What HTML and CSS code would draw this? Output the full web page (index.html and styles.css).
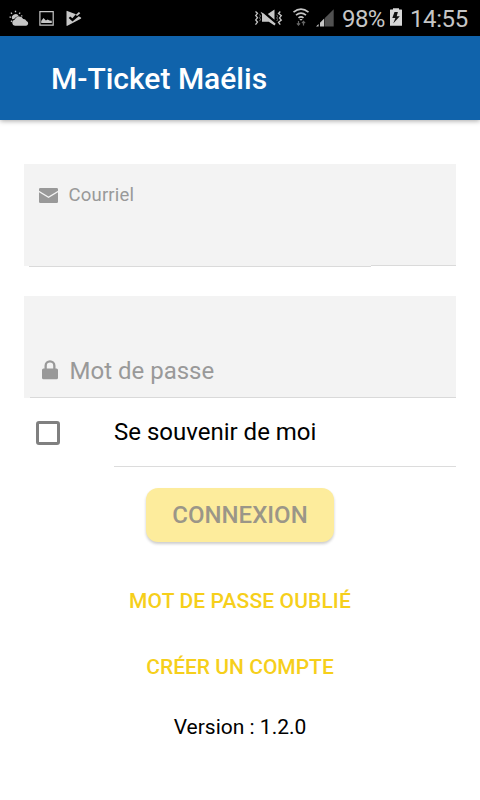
FILE: index.html
```
<!DOCTYPE html>
<html lang="fr">
<head>
<meta charset="utf-8">
<title>M-Ticket Maélis</title>
<link rel="stylesheet" href="styles.css">
</head>
<body>
<div class="status">
  <svg class="notifications" width="90" height="36" viewBox="0 0 90 36" aria-hidden="true">
    <g fill="#c6c6c6" stroke="#c6c6c6">
      <path stroke="none" d="M15 25.7a3 3 0 0 1-.5-5.900 4.800 4.800 0 0 1 8.700-.8 3.500 3.500 0 0 1 3.300 1.900 2.500 2.500 0 0 1-.3 4.800zM12.300 19.300a3.600 3.600 0 1 1 6.500-3.100q-3.200.4-4.700 2.700z"/>
      <path fill="none" stroke-width="1.300" d="M15.500 10.700v1.500M10.900 12.600l1.100 1.100M9.500 17.200h1.600M20.200 12.600l-1.100 1.100M21.300 16.100l1-.4M11 21.700l1-1"/>
      <path fill="none" stroke-width="1.200" d="M39.900 11.700h13.300v13.500H39.900z"/>
      <path stroke="none" d="M41.200 22.900V21l2.300-2.900 2.400 2.300 1.700-.9 2 .9 2.200.4v2.100z"/>
      <path stroke="none" d="M67.300 10.900q-.8-.2-.8.500V25.200q0 1 .9.600l13.400-7q1-.7.100-1.300l-2.200-1.200-6.200 5.100-3.800-3.400 1.500-1.600 2.200 1.900 3.500-4zM78.900 12l1.400 1.200-3.200 2.900-1.500-1.100z"/>
    </g>
  </svg>
  <div class="indicators">
    <svg width="84" height="36" viewBox="0 0 84 36" aria-hidden="true">
      <g fill="none" stroke="#c6c6c6" stroke-width="1.300">
        <path d="M1.500 11.500l2 1.800-1.800 2.200 1.800 2.200-1.800 2.200 1.800 2.200-2 2.600M26.300 11.500l-1.800 2 2.800 2.200-1.800 2.200 1.800 2.200-2.800 2.200 1.800 2.400"/>
        <path stroke="#777" stroke-width="1" d="M5.500 14.500l1 1.600-1 1.700 1 1.700-1 1.700M22.800 14.800l.8 1.500-.8 1.600.8 1.600-.8 1.500"/>
        <path fill="#c6c6c6" stroke="none" d="M6.500 11.800l3.200 1.800 12 10.200-1.200 1.600-5.700-3.600H8V14.500zM13.800 13.900l6.700-4.400v10.200z"/>
        <path stroke-width="1.700" d="M39.500 12.100q7.500-6 15 0M42 15.100q5-4 10 0M44.500 17.900q2.500-2 5 0"/>
        <path fill="#c6c6c6" stroke="none" d="M45.300 19h3.400L47 20.800z"/>
        <path stroke="#666" stroke-width="1.200" d="M44.500 21v4m-1.600-1.700l1.600 1.700 1.600-1.700M49.500 25.500v-4m-1.600 1.700l1.600-1.700 1.600 1.700"/>
      </g>
      <path fill="#515151" d="M70.900 17.900l8.800-8.700v17.300h-8.800z"/>
      <path fill="#c6c6c6" d="M62 26.500l2.600-2.500v2.500zM66 22.700l4.200-4.200v8H66z"/>
    </svg>
    <span class="percent">98%</span>
    <svg class="battery" width="12" height="36" viewBox="0 0 12 36" aria-hidden="true">
      <path fill="#d8d8d8" d="M3 8.300h6v1.300h2.500q.5 0 .5.500V25.700H0V10.100q0-.5.500-.5H3z"/>
      <path fill="#111" d="M7.900 12.100H4.500L2.300 18h3.100l-2.200 5.600 6.600-7.400H6.700z"/>
    </svg>
    <span class="clock">14:55</span>
  </div>
</div>
<header class="toolbar"><h1>M-Ticket Maélis</h1></header>
<main>
  <div class="field email">
    <svg class="mail-icon" width="19" height="15" viewBox="0 0 19 15" aria-hidden="true"><path fill="#999" d="M1.300 0h16.400Q19 0 19 1.300v1.500l-9.500 5.700L0 2.800V1.300Q0 0 1.300 0zM0 4.200l9.500 5.800L19 4.200v9.500q0 1.300-1.300 1.300H1.300Q0 15 0 13.700z"/></svg>
    <label>Courriel</label>
    <div class="underline"><i class="line-start"></i><i class="line-end"></i></div>
  </div>
  <div class="field password">
    <svg class="lock-icon" width="16" height="20" viewBox="0 0 16 20" aria-hidden="true"><path fill="#999" d="M1.500 8.500h1V5.700a5.500 5.500 0 0 1 11 0v2.800h1q1.500 0 1.500 1.500v7.800q0 1.500-1.500 1.500h-13Q0 19.300 0 17.800V10q0-1.500 1.500-1.500zm3.300 0h6.400V5.700a3.200 3.200 0 0 0-6.400 0z"/></svg>
    <label>Mot de passe</label>
  </div>
  <div class="remember">
    <span class="checkbox"></span>
    <div class="remember-label"><span>Se souvenir de moi</span></div>
  </div>
  <div class="actions">
    <button class="login"><span>CONNEXION</span></button>
    <a class="link forgot">MOT DE PASSE OUBLIÉ</a>
    <a class="link create">CRÉER UN COMPTE</a>
    <p class="version">Version : 1.2.0</p>
  </div>
</main>
</body>
</html>
```
FILE: styles.css
```
* { box-sizing: border-box; }
body { margin: 0; background: #fff; color: #000; font-family: Roboto, "Liberation Sans", sans-serif; width: 480px; height: 800px; overflow: hidden; }
svg { display: block; flex: none; }
.status { height: 36px; background: #000; color: #c6c6c6; display: flex; justify-content: space-between; font-size: 24px; line-height: 38px; white-space: nowrap; }
.indicators { display: flex; width: 226px; }
.percent { width: 48px; margin-left: 4px; letter-spacing: -.6px; }
.battery { margin-left: 0; }
.clock { margin-left: 8px; letter-spacing: -.4px; }
.toolbar { height: 84px; background: #1063ab; color: #fff; padding-left: 51px; box-shadow: 0 1px 5px rgba(0,0,0,.35); display: flex; align-items: center; }
h1 { margin: 2px 0 0; font-size: 30px; line-height: 36px; font-weight: 500; white-space: nowrap; }
main { padding: 44px 24px 0; }
.field { background: #f3f3f3; color: #999; display: flex; height: 102px; }
.email { display: grid; grid-template-columns: 19px 1fr; grid-template-rows: 101px 2px; height: 103px; padding-left: 15px; background: linear-gradient(#f3f3f3 102px, transparent 102px); }
.mail-icon { margin-top: 24px; }
.email label { margin: 20px 0 0 10.500px; font-size: 18.500px; line-height: 22px; letter-spacing: .2px; }
.underline { grid-column: 1 / 3; display: flex; margin-left: -10px; }
.underline i { height: 1px; background: #dadada; }
.line-start { width: 342px; margin-top: 1px; }
.line-end { flex: 1; }
.password { margin-top: 29px; padding: 64px 0 0 18px; background: linear-gradient(#d9d9d9, #d9d9d9) 6px 101px / 426px 1px no-repeat #f3f3f3; }
.lock-icon { margin-top: 0; }
.password label { margin-left: 11.500px; font-size: 24px; line-height: 22px; }
.remember { display: flex; height: 69px; padding-left: 12px; }
.checkbox { width: 24px; height: 24px; border: 3px solid #808080; border-radius: 3px; margin-top: 22.500px; }
.remember-label { flex: 1; margin-left: 54px; padding-top: 20px; border-bottom: 1px solid #dcdcdc; font-size: 24px; line-height: 28px; }
.actions { display: flex; flex-direction: column; align-items: center; }
.login { margin-top: 21px; width: 188px; height: 54px; border: 0; border-radius: 12px; background: #fdec9c; color: #9b9688; font: 500 24px/30px Roboto, "Liberation Sans", sans-serif; box-shadow: 0 2px 3px rgba(0,0,0,.2); padding: 0; }
.link { color: #f6cf1b; font-size: 21px; line-height: 26px; font-weight: 500; white-space: nowrap; }
.forgot { margin-top: 46px; letter-spacing: .12px; }
.create { margin-top: 40px; }
.version { margin: 34px 0 0; font-size: 21px; line-height: 26px; }
```
